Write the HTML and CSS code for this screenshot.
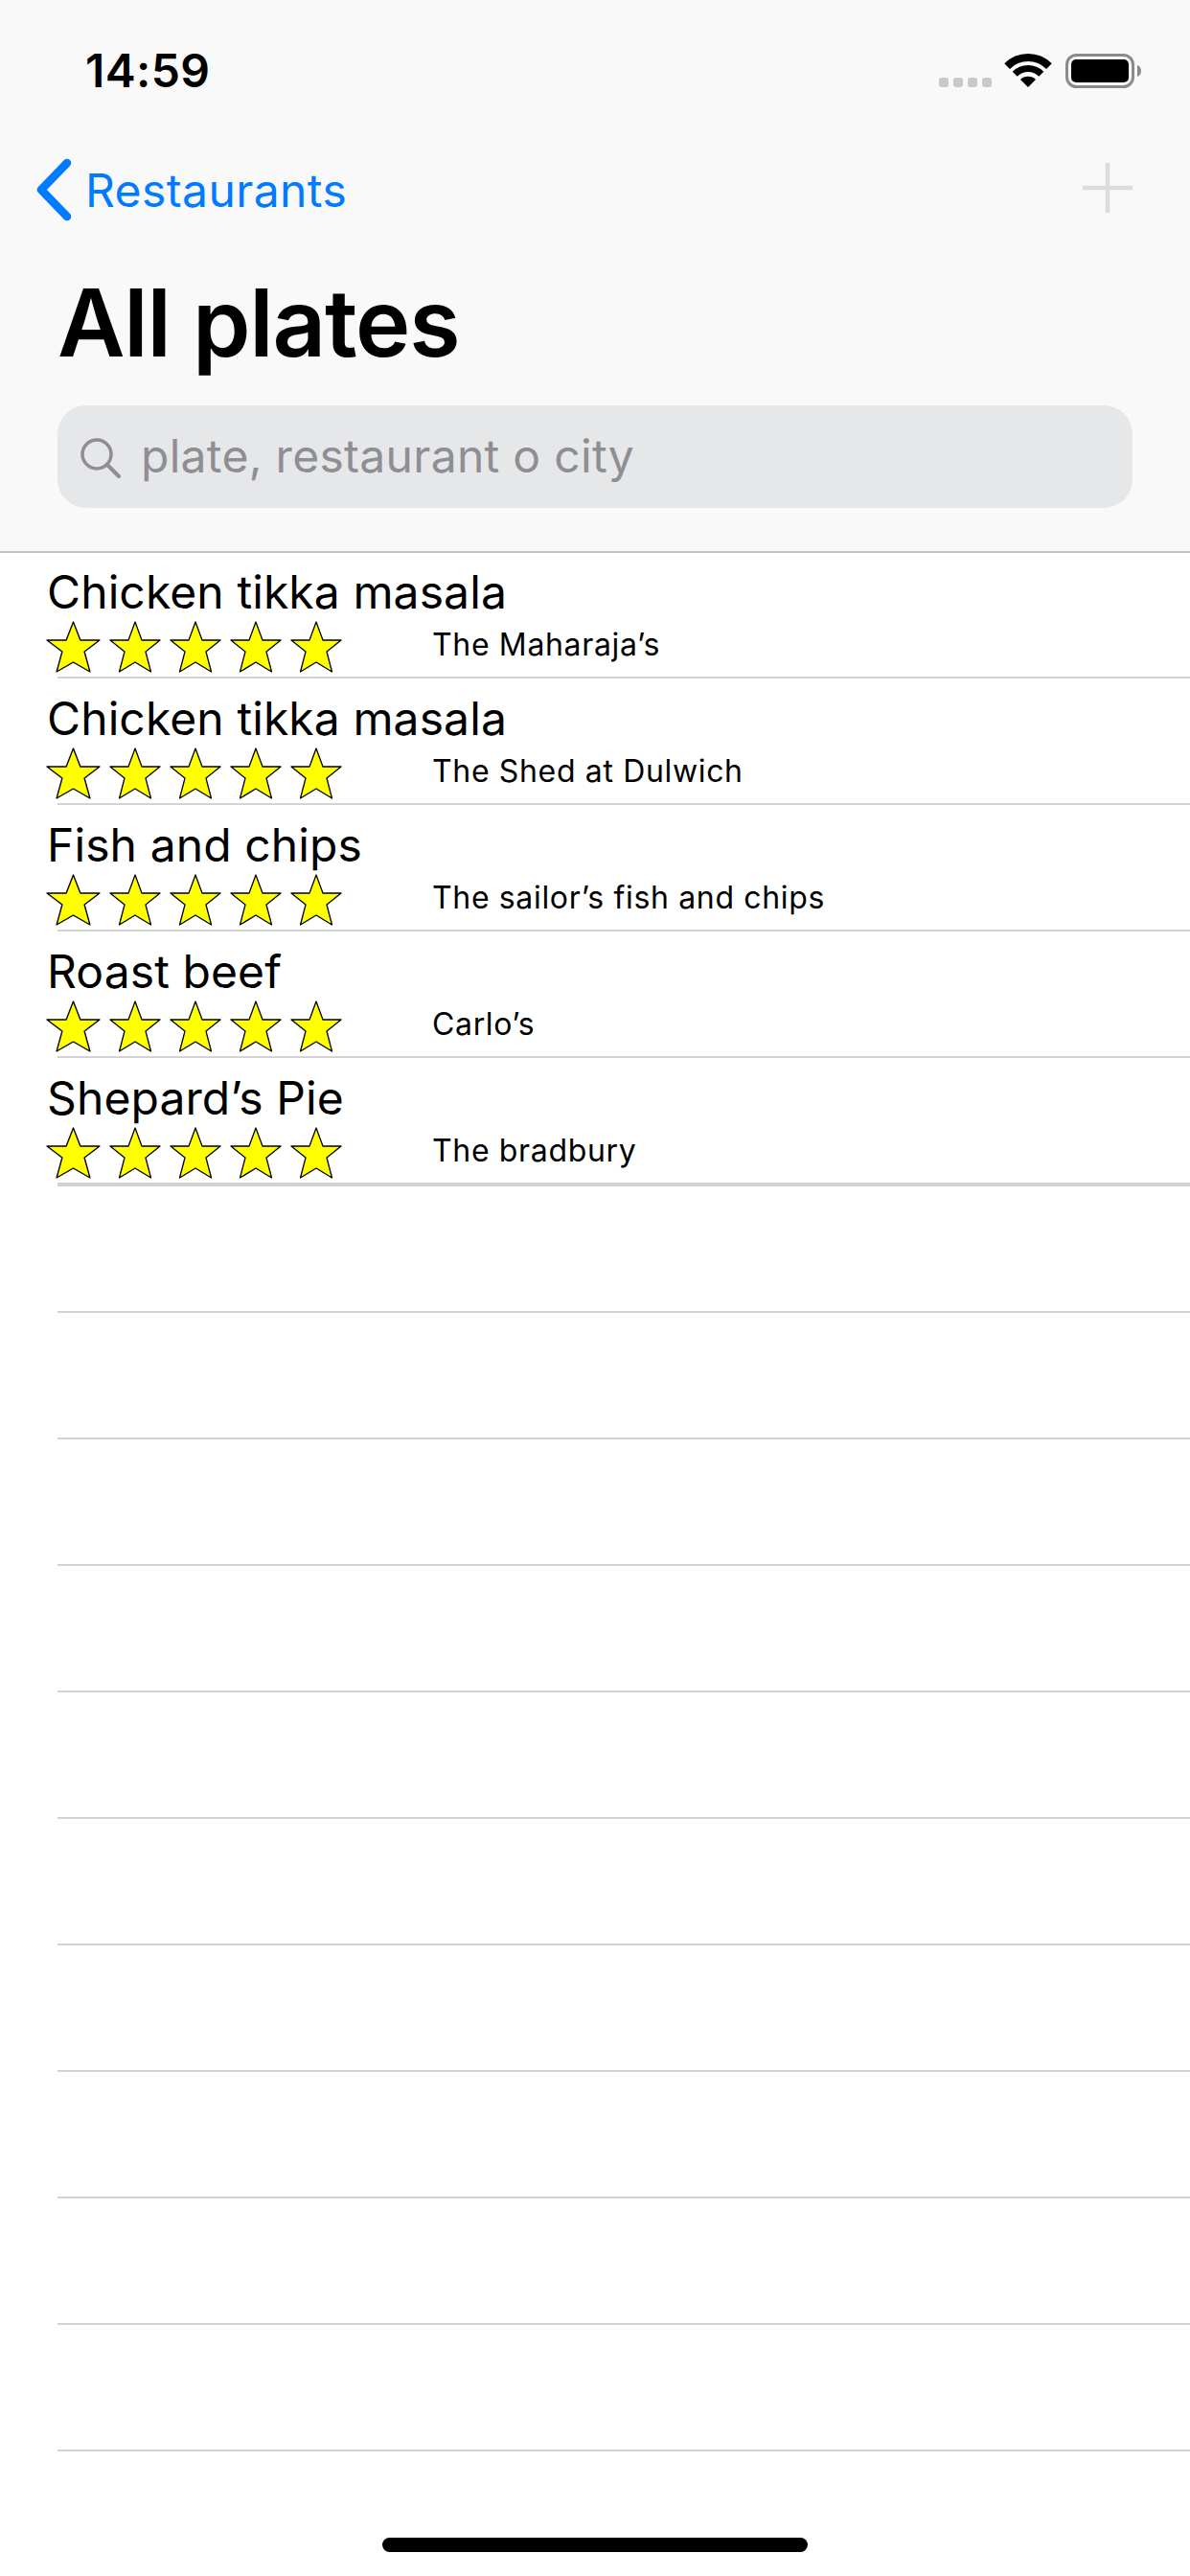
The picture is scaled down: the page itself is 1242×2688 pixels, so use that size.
FILE: index.html
```html
<!DOCTYPE html>
<html lang="en">
<head>
  <meta charset="UTF-8">
  <meta name="viewport" content="width=device-width, initial-scale=1.0">
  <title>All plates</title>
  <link rel="stylesheet" href="styles.css">
</head>
<body>

  <svg class="defs" width="0" height="0">
    <symbol id="star" viewBox="0 0 54 54" preserveAspectRatio="none">
      <polygon points="27,1 34,20 53,20 38,32 43.5,53 27,43 10.5,53 16,32 1,20 20,20" fill="#ffff00" stroke="#000" stroke-width="1.3" stroke-linejoin="round"/>
    </symbol>
  </svg>

  <header class="top">
    <div class="status-bar">
      <span class="time">14:59</span>
      <div class="status-icons">
        <div class="signal"><i></i><i></i><i></i><i></i></div>
        <svg class="wifi" width="50" height="35" viewBox="0 0 50 35">
          <path d="M3.1 13.1A31 31 0 0 1 46.9 13.1" fill="none" stroke="#000" stroke-width="8"/>
          <path d="M11.2 21.2A19.5 19.5 0 0 1 38.8 21.2" fill="none" stroke="#000" stroke-width="7"/>
          <path d="M25 35L17 27A11.3 11.3 0 0 1 33 27Z"/>
        </svg>
        <svg class="battery" width="79" height="36" viewBox="0 0 79 36">
          <rect x="1.5" y="1.5" width="69" height="33" rx="10" fill="none" stroke="#8a8a8a" stroke-width="3"/>
          <rect x="6" y="6" width="60" height="24" rx="5"/>
          <path d="M75 12C78 13 79 15.5 79 18C79 20.5 78 23 75 24Z" fill="#8a8a8a"/>
        </svg>
      </div>
    </div>
    <nav class="nav-bar">
      <a class="back" href="#">
        <svg class="chevron" width="40" height="66" viewBox="0 0 40 66">
          <path d="M33 5L6 33L33 61" fill="none" stroke="#007aff" stroke-width="8.5" stroke-linecap="round" stroke-linejoin="round"/>
        </svg>
        <span>Restaurants</span>
      </a>
      <svg class="plus" width="52" height="52" viewBox="0 0 52 52">
        <path d="M26 0V52M0 26H52" stroke="#dcdcdc" stroke-width="4.5"/>
      </svg>
    </nav>
    <h1>All plates</h1>
    <div class="search">
      <svg class="search-icon" width="44" height="44" viewBox="0 0 44 44">
        <circle cx="18" cy="18" r="15" fill="none" stroke="#8e8e93" stroke-width="3.5"/>
        <path d="M29 29L41 41" stroke="#8e8e93" stroke-width="4" stroke-linecap="round"/>
      </svg>
      <span class="placeholder">plate, restaurant o city</span>
    </div>
  </header>

  <ul class="plates">
    <li class="row">
      <div class="cell">
        <div class="plate-name">Chicken tikka masala</div>
        <div class="meta">
          <div class="stars">
            <svg><use href="#star"/></svg><svg><use href="#star"/></svg><svg><use href="#star"/></svg><svg><use href="#star"/></svg><svg><use href="#star"/></svg>
          </div>
          <span class="place">The Maharaja’s</span>
        </div>
      </div>
    </li>
    <li class="row">
      <div class="cell">
        <div class="plate-name">Chicken tikka masala</div>
        <div class="meta">
          <div class="stars">
            <svg><use href="#star"/></svg><svg><use href="#star"/></svg><svg><use href="#star"/></svg><svg><use href="#star"/></svg><svg><use href="#star"/></svg>
          </div>
          <span class="place">The Shed at Dulwich</span>
        </div>
      </div>
    </li>
    <li class="row">
      <div class="cell">
        <div class="plate-name">Fish and chips</div>
        <div class="meta">
          <div class="stars">
            <svg><use href="#star"/></svg><svg><use href="#star"/></svg><svg><use href="#star"/></svg><svg><use href="#star"/></svg><svg><use href="#star"/></svg>
          </div>
          <span class="place">The sailor’s fish and chips</span>
        </div>
      </div>
    </li>
    <li class="row">
      <div class="cell">
        <div class="plate-name">Roast beef</div>
        <div class="meta">
          <div class="stars">
            <svg><use href="#star"/></svg><svg><use href="#star"/></svg><svg><use href="#star"/></svg><svg><use href="#star"/></svg><svg><use href="#star"/></svg>
          </div>
          <span class="place">Carlo’s</span>
        </div>
      </div>
    </li>
    <li class="row">
      <div class="cell">
        <div class="plate-name">Shepard’s Pie</div>
        <div class="meta">
          <div class="stars">
            <svg><use href="#star"/></svg><svg><use href="#star"/></svg><svg><use href="#star"/></svg><svg><use href="#star"/></svg><svg><use href="#star"/></svg>
          </div>
          <span class="place">The bradbury</span>
        </div>
      </div>
    </li>
    <li class="row"></li>
    <li class="row"></li>
    <li class="row"></li>
    <li class="row"></li>
    <li class="row"></li>
    <li class="row"></li>
    <li class="row"></li>
    <li class="row"></li>
    <li class="row"></li>
    <li class="row"></li>
    <li class="row"></li>
  </ul>

  <div class="home-indicator"></div>

</body>
</html>
```

FILE: styles.css
```css
* { box-sizing: border-box; }

html, body {
  margin: 0;
  height: 2688px;
  overflow: hidden;
  background: #fff;
  color: #000;
  font-family: Inter, "Liberation Sans", sans-serif;
}

.defs { display: block; height: 0; }

/* header */
.top {
  height: 577px;
  background: #f9f9f9;
  border-bottom: 2px solid #c2c2c4;
}

.status-bar {
  height: 132px;
  padding: 48px 51px 0 89px;
  display: flex;
  justify-content: space-between;
  align-items: flex-start;
}
.time {
  font-size: 48px;
  font-weight: 600;
  line-height: 52px;
  letter-spacing: 0.4px;
}
.status-icons {
  display: flex;
  align-items: flex-start;
  margin-top: 8px;
}
.signal {
  display: flex;
  gap: 5px;
  margin: 25px 13px 0 0;
}
.signal i {
  width: 10px;
  height: 10px;
  border-radius: 3px;
  background: #c8c8c8;
}
.wifi { margin-right: 14px; }

.nav-bar {
  height: 132px;
  padding: 0 60px 0 37px;
  display: flex;
  justify-content: space-between;
  align-items: center;
}
.back {
  display: flex;
  align-items: center;
  gap: 12px;
  color: #007aff;
  text-decoration: none;
  font-size: 48px;
  letter-spacing: 0.4px;
}
.plus { margin-top: -4px; }

h1 {
  margin: 21px 0 0 60px;
  font-size: 97px;
  font-weight: 600;
  line-height: 104px;
  letter-spacing: -1.2px;
}

.search {
  height: 107px;
  margin: 34px 60px 0;
  padding-left: 23px;
  display: flex;
  align-items: center;
  gap: 20px;
  background: #e6e7e9;
  border-radius: 30px;
}
.search-icon { flex: none; margin-top: 2px; }
.placeholder {
  font-size: 48px;
  color: #8e8e93;
  letter-spacing: 0.3px;
  margin-bottom: 2px;
}

/* list */
.plates {
  list-style: none;
  margin: -1px 0 0;
  padding: 0;
}
.row {
  height: 132px;
  display: flex;
  flex-direction: column;
}
.row::after {
  content: "";
  height: 2px;
  margin-left: 60px;
  background: #d2d1d5;
}
.cell {
  flex: 1;
  padding: 13px 0 0 49px;
}
.plate-name {
  font-size: 48px;
  line-height: 58px;
  letter-spacing: 0.1px;
}
.meta {
  display: flex;
  align-items: center;
  margin: 1px 0 0 -1px;
}
.stars {
  width: 403px;
  flex: none;
  display: flex;
  gap: 9px;
}
.stars svg {
  width: 54px;
  height: 54px;
}
.stars svg:first-child { width: 57px; }
.place {
  font-size: 32px;
  letter-spacing: 0.65px;
  margin-bottom: 5px;
}

.home-indicator {
  position: fixed;
  left: 399px;
  bottom: 25px;
  width: 444px;
  height: 15px;
  border-radius: 8px;
  background: #000;
}
```
